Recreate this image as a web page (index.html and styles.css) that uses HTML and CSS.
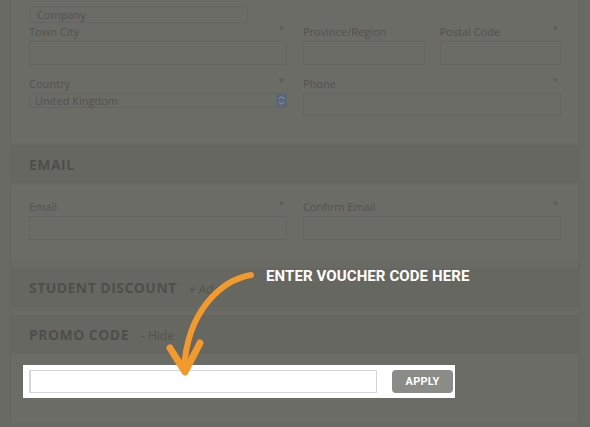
FILE: index.html
```html
<!DOCTYPE html>
<html lang="en">
<head>
  <meta charset="UTF-8" />
  <title>Checkout - Promo Code</title>
  <link rel="stylesheet" href="styles.css">
</head>
<body>

  <div class="form">

    <!-- ADDRESS -->
    <section class="panel address">
      <div class="field company">Company</div>

      <div class="row">
        <div class="col">
          <div class="lbl">Town City <span class="req">*</span></div>
          <div class="field"></div>
        </div>
        <div class="col split">
          <div class="col">
            <div class="lbl">Province/Region</div>
            <div class="field"></div>
          </div>
          <div class="col">
            <div class="lbl">Postal Code <span class="req">*</span></div>
            <div class="field"></div>
          </div>
        </div>
      </div>

      <div class="row second">
        <div class="col">
          <div class="lbl">Country <span class="req">*</span></div>
          <div class="select">
            <span>United Kingdom</span>
            <span class="select-arrow">
              <svg width="7" height="11" viewBox="0 0 7 11">
                <path d="M1 4 L3.5 1.5 L6 4 M1 7 L3.5 9.5 L6 7" fill="none" stroke="#8796a8" stroke-width="1"/>
              </svg>
            </span>
          </div>
        </div>
        <div class="col">
          <div class="lbl">Phone <span class="req">*</span></div>
          <div class="field phone"></div>
        </div>
      </div>
    </section>

    <!-- EMAIL -->
    <div class="band"><h3>EMAIL</h3></div>
    <section class="panel email">
      <div class="row">
        <div class="col">
          <div class="lbl">Email <span class="req">*</span></div>
          <div class="field"></div>
        </div>
        <div class="col">
          <div class="lbl">Confirm Email <span class="req">*</span></div>
          <div class="field"></div>
        </div>
      </div>
    </section>

    <!-- STUDENT DISCOUNT -->
    <div class="band student"><h3>STUDENT DISCOUNT</h3><span class="toggle">+ Add</span></div>

    <!-- PROMO CODE -->
    <div class="band promo"><h3>PROMO CODE</h3><span class="toggle">- Hide</span></div>
    <section class="panel voucher">
      <div class="highlight">
        <div class="voucher-input"></div>
        <div class="apply">APPLY</div>
      </div>
    </section>

  </div>

  <!-- CALLOUT -->
  <div class="callout">ENTER VOUCHER CODE HERE</div>
  <svg class="arrow" width="590" height="427" viewBox="0 0 590 427">
    <path d="M251 275 C 222 280, 187 310, 184 370" fill="none" stroke="#f29a2e" stroke-width="6" stroke-linecap="round"/>
    <path d="M170 348 L185 372 L200 343" fill="none" stroke="#f29a2e" stroke-width="7" stroke-linecap="round" stroke-linejoin="round"/>
  </svg>

</body>
</html>
```

FILE: styles.css
```css
body {
  margin: 0;
  background: #6a6a65;
  font-family: 'Open Sans', 'Noto Sans', sans-serif;
  color: #53534e;
  width: 590px;
  height: 427px;
  overflow: hidden;
  position: relative;
}
.form {
  margin-left: 10px;
  width: 570px;
  border-left: 1px solid #656560;
  border-right: 1px solid #656560;
  box-sizing: border-box;
  height: 427px;
}
.panel {
  background: #6c6c67;
  padding: 0 18px;
  box-sizing: border-box;
}
.address {
  padding-top: 6px;
  height: 143px;
}
.field {
  height: 24px;
  border: 1px solid #646460;
  box-sizing: border-box;
}
.company {
  width: 218px;
  height: 17px;
  margin-left: 1px;
  padding-left: 6px;
  font-size: 11px;
  line-height: 15px;
}
.row {
  display: flex;
  gap: 16px;
  margin-top: 2px;
}
.row.second {
  margin-top: 12px;
}
.col {
  flex: 1;
  min-width: 0;
}
.split {
  display: flex;
  gap: 15px;
}
.lbl {
  display: flex;
  justify-content: space-between;
  font-size: 11px;
  line-height: 14px;
  margin-bottom: 2px;
}
.req {
  font-size: 9px;
  line-height: 9px;
  padding-right: 3px;
}
.select {
  height: 15px;
  border: 1px solid #646460;
  box-sizing: border-box;
  display: flex;
  justify-content: space-between;
  font-size: 11px;
  line-height: 13px;
  padding-left: 5px;
}
.select-arrow {
  width: 11px;
  height: 15px;
  margin-top: -1px;
  margin-right: -1px;
  background: #5b6776;
  border-radius: 2px;
  display: flex;
  align-items: center;
  justify-content: center;
}
.phone {
  margin-top: 2px;
  height: 23px;
}
.band {
  background: #676762;
  height: 38px;
  margin-top: 2px;
  padding-left: 18px;
  display: flex;
  align-items: center;
  gap: 12px;
}
.band h3 {
  margin: 0;
  font-family: 'Open Sans', sans-serif;
  font-weight: 700;
  font-size: 14px;
  color: #4f4f4a;
  letter-spacing: 0.45px;
}
.toggle {
  font-size: 12px;
  color: #53534e;
  padding-top: 3px;
}
.email {
  margin-top: 2px;
  height: 75px;
  padding-top: 13px;
}
.student {
  margin-top: 8px;
  height: 39px;
}
.promo {
  margin-top: 8px;
}
.voucher {
  margin-top: 2px;
  height: 67px;
  padding: 10px 0 0 12px;
}
.highlight {
  width: 432px;
  height: 33px;
  background: #fff;
  display: flex;
  align-items: center;
  padding: 0 1px 0 6px;
  box-sizing: border-box;
  gap: 15px;
}
.voucher-input {
  width: 348px;
  height: 23px;
  border: 1px solid #d6d6d6;
  border-left-width: 2px;
  box-sizing: border-box;
}
.apply {
  width: 61px;
  height: 23px;
  background: #8b8b88;
  border-radius: 4px;
  color: #fff;
  font-family: Roboto, 'Liberation Sans', sans-serif;
  font-weight: 700;
  font-size: 11px;
  letter-spacing: 0.2px;
  display: flex;
  align-items: center;
  justify-content: center;
}
.callout {
  position: absolute;
  left: 266px;
  top: 267px;
  color: #fff;
  font-family: Roboto, 'Liberation Sans', sans-serif;
  font-weight: 700;
  font-size: 15px;
  letter-spacing: 0.1px;
}
.arrow {
  position: absolute;
  left: 0;
  top: 0;
}
```
